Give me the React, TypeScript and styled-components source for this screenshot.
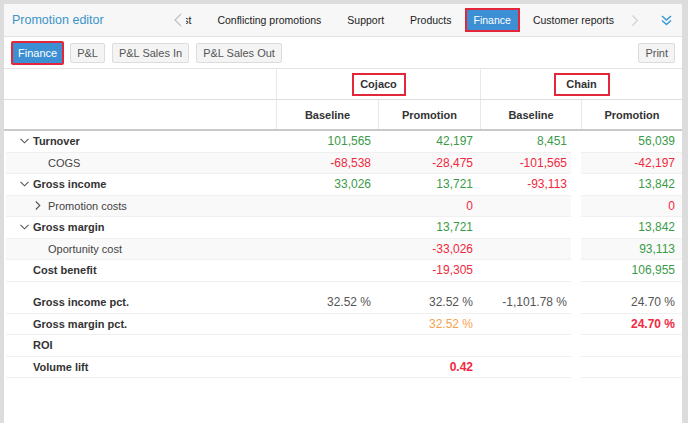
import styled, { createGlobalStyle } from "styled-components";

type Tone = "green" | "red" | "orange" | "gray";
type Cell = [string, Tone?, boolean?];
type Row = {
  label: string;
  level: 0 | 1;
  toggle?: "open" | "closed";
  bold?: boolean;
  shaded?: boolean;
  values: Cell[];
};

const toneColor: Record<Tone, string> = {
  green: "#3b9a48",
  red: "#f1283e",
  orange: "#f5a24f",
  gray: "#555555",
};

const GlobalStyle = createGlobalStyle`
  html, body {
    margin: 0;
    background: #dcdcdc;
  }
  body {
    font-family: "Liberation Sans", Arial, sans-serif;
    color: #333;
  }
  * { box-sizing: border-box; }
`;

const Frame = styled.div`
  height: 423px;
  padding: 4px 6px 0 4px;
  overflow: hidden;
`;

const Panel = styled.div`
  height: 100%;
  background: #fff;
  display: flex;
  flex-direction: column;
`;

const HeaderBar = styled.div`
  height: 33px;
  display: flex;
  align-items: center;
  padding: 0 4px 0 8px;
  background: #f7f7f7;
  border-bottom: 1px solid #e2e2e2;
`;

const Title = styled.div`
  font-size: 12.5px;
  color: #3b94c9;
  white-space: nowrap;
`;

const NavArrow = styled.div<{ $w: number }>`
  width: ${(p) => p.$w}px;
  height: 33px;
  flex: none;
  display: flex;
  align-items: center;
  justify-content: center;
`;

const LeftNav = styled(NavArrow)`
  margin-left: auto;
`;

const MenuButton = styled(NavArrow)`
  margin-left: 11px;
`;

const TabViewport = styled.div`
  width: 441px;
  height: 33px;
  overflow: hidden;
  display: flex;
  justify-content: flex-end;
  align-items: center;
`;

const Tab = styled.div<{ $active?: boolean }>`
  flex: none;
  height: 24px;
  display: flex;
  align-items: center;
  padding: 0 ${(p) => (p.$active ? 7 : 11)}px;
  font-size: 10.5px;
  white-space: nowrap;
  color: ${(p) => (p.$active ? "#fff" : "#222")};
  background: ${(p) => (p.$active ? "#3d8fd4" : "transparent")};
  border: 2px solid ${(p) => (p.$active ? "#e3263a" : "transparent")};
`;

const Toolbar = styled.div`
  height: 31px;
  display: flex;
  align-items: center;
  gap: 7px;
  padding: 0 7px;
`;

const ToolButton = styled.div<{ $active?: boolean }>`
  height: ${(p) => (p.$active ? 24 : 20)}px;
  display: flex;
  align-items: center;
  padding: 0 ${(p) => (p.$active ? 5 : 6)}px;
  font-size: 11px;
  border-radius: 2px;
  white-space: nowrap;
  color: ${(p) => (p.$active ? "#fff" : "#555")};
  background: ${(p) => (p.$active ? "#3d8fd4" : "#f4f4f4")};
  border: ${(p) => (p.$active ? "2px solid #e3263a" : "1px solid #dcdcdc")};
  margin-right: ${(p) => (p.$active ? -1 : 0)}px;
`;

const PrintButton = styled(ToolButton)`
  margin-left: auto;
`;

const TableHead = styled.div`
  border-top: 1px solid #e4e4e4;
`;

const HeadRow = styled.div<{ $cols: string; $h: number; $strong?: boolean }>`
  display: grid;
  grid-template-columns: ${(p) => p.$cols};
  height: ${(p) => p.$h}px;
  border-bottom: ${(p) => (p.$strong ? "2px solid #c9c9c9" : "1px solid #dedede")};
`;

const HeadCell = styled.div<{ $first?: boolean }>`
  display: flex;
  align-items: center;
  justify-content: center;
  font-size: 11px;
  font-weight: bold;
  color: #333;
  border-left: ${(p) => (p.$first ? "none" : "1px solid #e8e8e8")};
`;

const Marked = styled.span<{ $w: number }>`
  width: ${(p) => p.$w}px;
  height: 23px;
  display: flex;
  align-items: center;
  justify-content: center;
  border: 2px solid #e3263a;
`;

const BodyRow = styled.div`
  display: grid;
  grid-template-columns: 272px 102px 102px 101px 101px;
  height: 21.5px;
`;

const Spacer = styled.div`
  height: 10.5px;
`;

const LabelCell = styled.div<{ $level: number; $bold?: boolean; $shaded?: boolean }>`
  display: flex;
  align-items: center;
  padding-left: ${(p) => (p.$level ? 29 : 14)}px;
  margin-left: 2px;
  font-size: 11px;
  font-weight: ${(p) => (p.$bold ? "bold" : "normal")};
  color: ${(p) => (p.$bold ? "#333" : "#444")};
  background: ${(p) => (p.$shaded ? "#f9f9f9" : "#fff")};
  border-bottom: 1px solid #f0f0f0;
  white-space: nowrap;
`;

const Toggle = styled.span`
  width: 13px;
  flex: none;
  display: flex;
  align-items: center;
`;

const ValueCell = styled.div<{ $tone: Tone; $bold?: boolean; $shaded?: boolean; $gutter?: boolean }>`
  display: flex;
  align-items: center;
  justify-content: flex-end;
  padding-right: ${(p) => (p.$gutter ? 4 : 7)}px;
  margin-right: ${(p) => (p.$gutter ? 10 : 0)}px;
  font-size: 12px;
  font-weight: ${(p) => (p.$bold ? "bold" : "normal")};
  color: ${(p) => toneColor[p.$tone]};
  background: ${(p) => (p.$shaded ? "#f9f9f9" : "#fff")};
  border-bottom: 1px solid #f0f0f0;
  white-space: nowrap;
`;

const ChevronLeft = () => (
  <svg width="8" height="14" viewBox="0 0 8 14">
    <polyline points="7,1 1,7 7,13" fill="none" stroke="#bdbdbd" strokeWidth="1.1" />
  </svg>
);

const ChevronRight = () => (
  <svg width="6" height="11" viewBox="0 0 6 11">
    <polyline points="0.5,0.5 5.5,5.5 0.5,10.5" fill="none" stroke="#cfcfcf" strokeWidth="1.1" />
  </svg>
);

const ChevronsDown = () => (
  <svg width="11" height="11" viewBox="0 0 11 11">
    <polyline points="1,1 5.5,5 10,1" fill="none" stroke="#3d9ad9" strokeWidth="1.6" />
    <polyline points="1,5.5 5.5,9.5 10,5.5" fill="none" stroke="#3d9ad9" strokeWidth="1.6" />
  </svg>
);

const ToggleIcon = ({ open }: { open: boolean }) =>
  open ? (
    <svg width="9" height="6" viewBox="0 0 9 6">
      <polyline points="0.5,0.8 4.5,4.8 8.5,0.8" fill="none" stroke="#555" strokeWidth="1.1" />
    </svg>
  ) : (
    <svg width="6" height="9" viewBox="0 0 6 9">
      <polyline points="0.8,0.5 4.8,4.5 0.8,8.5" fill="none" stroke="#555" strokeWidth="1.1" />
    </svg>
  );

const tabs = ["Forecast", "Conflicting promotions", "Support", "Products", "Finance", "Customer reports"];
const tools = ["Finance", "P&L", "P&L Sales In", "P&L Sales Out"];

const topRows: Row[] = [
  { label: "Turnover", level: 0, toggle: "open", bold: true,
    values: [["101,565", "green"], ["42,197", "green"], ["8,451", "green"], ["56,039", "green"]] },
  { label: "COGS", level: 1, shaded: true,
    values: [["-68,538", "red"], ["-28,475", "red"], ["-101,565", "red"], ["-42,197", "red"]] },
  { label: "Gross income", level: 0, toggle: "open", bold: true,
    values: [["33,026", "green"], ["13,721", "green"], ["-93,113", "red"], ["13,842", "green"]] },
  { label: "Promotion costs", level: 1, toggle: "closed", shaded: true,
    values: [[""], ["0", "red"], [""], ["0", "red"]] },
  { label: "Gross margin", level: 0, toggle: "open", bold: true,
    values: [[""], ["13,721", "green"], [""], ["13,842", "green"]] },
  { label: "Oportunity cost", level: 1, shaded: true,
    values: [[""], ["-33,026", "red"], [""], ["93,113", "green"]] },
  { label: "Cost benefit", level: 0, bold: true,
    values: [[""], ["-19,305", "red"], [""], ["106,955", "green"]] },
];

const kpiRows: Row[] = [
  { label: "Gross income pct.", level: 0, bold: true,
    values: [["32.52 %", "gray"], ["32.52 %", "gray"], ["-1,101.78 %", "gray"], ["24.70 %", "gray"]] },
  { label: "Gross margin pct.", level: 0, bold: true,
    values: [[""], ["32.52 %", "orange"], [""], ["24.70 %", "red", true]] },
  { label: "ROI", level: 0, bold: true, values: [[""], [""], [""], [""]] },
  { label: "Volume lift", level: 0, bold: true,
    values: [[""], ["0.42", "red", true], [""], [""]] },
];

const DataRow = ({ row }: { row: Row }) => (
  <BodyRow>
    <LabelCell $level={row.level} $bold={row.bold} $shaded={row.shaded}>
      <Toggle>{row.toggle && <ToggleIcon open={row.toggle === "open"} />}</Toggle>
      {row.label}
    </LabelCell>
    {row.values.map(([text, tone, bold], i) => (
      <ValueCell key={i} $tone={tone ?? "gray"} $bold={bold} $shaded={row.shaded} $gutter={i === 2}>
        {text}
      </ValueCell>
    ))}
  </BodyRow>
);

export default function App() {
  return (
    <>
      <GlobalStyle />
      <Frame>
        <Panel>
          <HeaderBar>
            <Title>Promotion editor</Title>
            <LeftNav $w={16}>
              <ChevronLeft />
            </LeftNav>
            <TabViewport>
              {tabs.map((t) => (
                <Tab key={t} $active={t === "Finance"}>
                  {t}
                </Tab>
              ))}
            </TabViewport>
            <NavArrow $w={16}>
              <ChevronRight />
            </NavArrow>
            <MenuButton $w={24}>
              <ChevronsDown />
            </MenuButton>
          </HeaderBar>

          <Toolbar>
            {tools.map((t) => (
              <ToolButton key={t} $active={t === "Finance"}>
                {t}
              </ToolButton>
            ))}
            <PrintButton>Print</PrintButton>
          </Toolbar>

          <TableHead>
            <HeadRow $cols="272px 204px 202px" $h={31}>
              <HeadCell $first />
              <HeadCell>
                <Marked $w={54}>Cojaco</Marked>
              </HeadCell>
              <HeadCell>
                <Marked $w={56}>Chain</Marked>
              </HeadCell>
            </HeadRow>
            <HeadRow $cols="272px 102px 102px 101px 101px" $h={31} $strong>
              <HeadCell $first />
              <HeadCell>Baseline</HeadCell>
              <HeadCell>Promotion</HeadCell>
              <HeadCell>Baseline</HeadCell>
              <HeadCell>Promotion</HeadCell>
            </HeadRow>
          </TableHead>

          {topRows.map((r) => (
            <DataRow key={r.label} row={r} />
          ))}
          <Spacer />
          {kpiRows.map((r) => (
            <DataRow key={r.label} row={r} />
          ))}
        </Panel>
      </Frame>
    </>
  );
}
